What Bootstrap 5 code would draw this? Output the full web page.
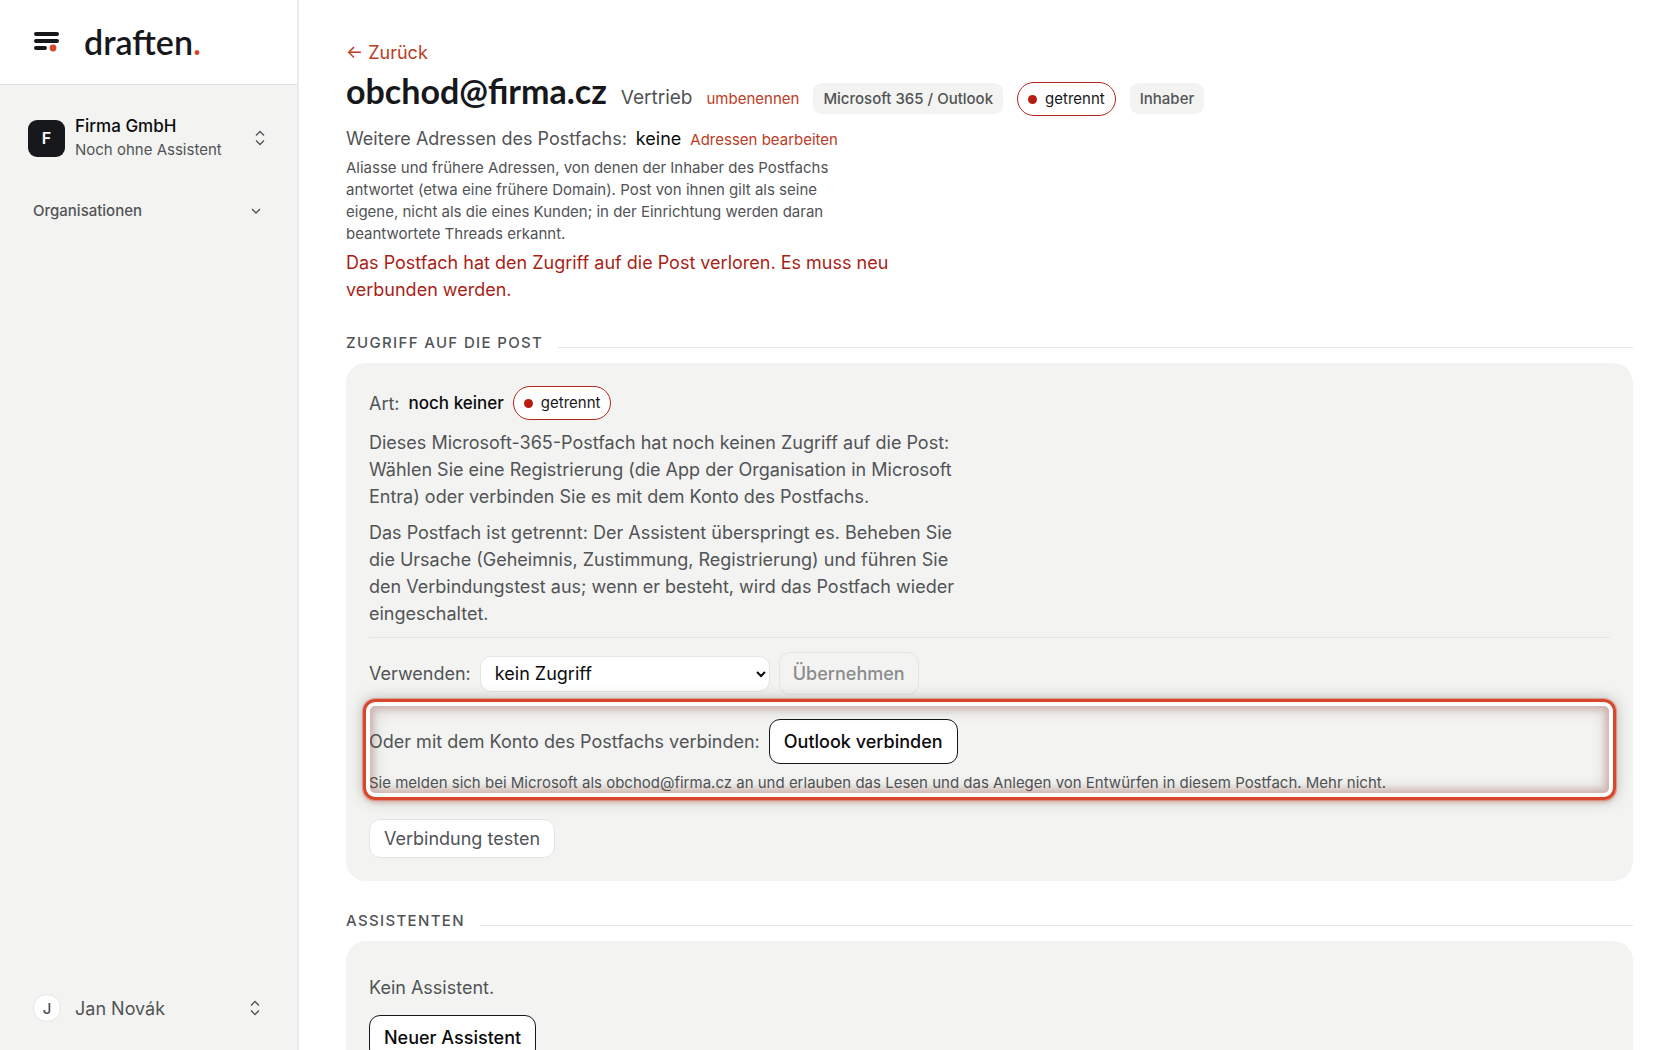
<!DOCTYPE html>
<html lang="de">
<head>
<meta charset="utf-8">
<meta name="viewport" content="width=device-width, initial-scale=1">
<title>draften – obchod@firma.cz</title>
<link href="https://cdn.jsdelivr.net/npm/bootstrap@5.3.0/dist/css/bootstrap.min.css" rel="stylesheet">
<style>
  :root { --ink: #17181c; --muted-ink: #515356; --paper: #f3f3f1; --rule: #e5e5e3; --accent: #bd3b22; --alarm: #a81f17; }
  body { font-family: Inter, "Liberation Sans", sans-serif; font-size: 18px; line-height: 27px; color: var(--muted-ink); background: #fff; }
  p { margin: 0; }
  a { color: var(--accent); text-decoration: none; }
  .text-ink { color: #0b0b0d; }
  .text-alarm { color: var(--alarm); }
  .text-strong { font-size: 17px; font-weight: 500; }
  .fs-note { font-size: 15px; line-height: 22px; }
  .display-face { font-family: Lato, Inter, sans-serif; color: var(--ink); }

  .app-shell { height: 100vh; }
  .side { width: 299px; background: var(--paper); border-right: 2px solid #ececea; }
  .side-brand { height: 85px; background: #fff; border-bottom: 1px solid #dededc; padding: 0 32px; gap: 24px; }
  .brand-name { font-size: 34px; line-height: 40px; font-weight: 600; color: var(--ink); }
  .brand-name span { color: #d6462c; }
  .plain-btn { border: 0; background: none; padding: 0; color: inherit; text-align: left; }
  .org-tile { width: 37px; height: 37px; border-radius: 9px; background: var(--ink); color: #fff; font-size: 16px; font-weight: 600; }
  .org-btn { margin: 29px 32px 0 28px; gap: 10px; line-height: 24px; }
  .org-btn .fs-note { line-height: 24px; }
  .nav-btn { margin: 38px 36px 0 33px; font-weight: 500; }
  .user-btn { margin: 0 37px 28px 33px; gap: 14px; }
  .user-dot { width: 28px; height: 28px; border-radius: 50%; background: #fff; border: 1px solid var(--rule); font-size: 15px; font-weight: 500; }

  .page { padding: 39px 47px 0; overflow: hidden; }
  .page-title { font-size: 34px; line-height: 44px; font-weight: 700; margin: 0; }
  .title-row { gap: 14px; margin: 3px 0 9px; }
  .role-name { font-size: 19px; }
  .chip { font-size: 15px; line-height: 23px; padding: 4px 10px; border-radius: 9px; background: var(--paper); font-weight: 500; }
  .state-pill { font-size: 15px; line-height: 24px; padding: 4px 10px; border: 1px solid #b3261c; border-radius: 17px; background: #fff; color: var(--ink); }
  .state-pill i { display: inline-block; width: 9px; height: 9px; margin-right: 8px; border-radius: 50%; background: #b71c13; }
  .gap-row { gap: 9px; }
  .narrow-note { max-width: 500px; margin-top: 5px; }
  .narrow-text { max-width: 592px; }
  .sect-head { gap: 15px; margin-top: 28px; }
  .sect-head h2 { font-size: 15px; line-height: 24px; font-weight: 500; letter-spacing: .09em; text-transform: uppercase; margin: 0; }
  .sect-head::after { content: ""; flex: 1; height: 1px; background: var(--rule); margin-top: 9px; }
  .panel { background: var(--paper); border-radius: 20px; padding: 23px; }
  .panel p.narrow-text { margin-top: 9px; }
  .panel-rule { border-top: 1px solid var(--rule); padding-top: 14px; margin-top: 10px; }
  .ctl { font-size: 18px; line-height: 27px; border-radius: 11px; padding: 5px 14px; background: #fff; border: 1px solid var(--rule); color: var(--muted-ink); }
  .ctl-strong { border-color: var(--ink); color: #0b0b0d; font-weight: 500; padding: 8px 14px; }
  .ctl-off { background: none; color: #8b8c8d; font-weight: 500; padding: 7px 13px; }
  .ctl-select { width: 290px; height: 36px; padding: 3px 10px; color: #0b0b0d; }
  .spot { position: relative; margin: 8px 0 25px; padding-top: 16px; }
  .spot::after { content: ""; position: absolute; inset: -4px -6px -6px; border: 3px solid #d8472b; border-radius: 12px; pointer-events: none;
    box-shadow: inset 0 0 0 4px #fff, inset 0 0 5px 8px rgba(190,70,60,.2), inset 0 0 14px 8px rgba(60,50,40,.2), 0 0 0 1px rgba(214,70,44,.35), 0 3px 3px rgba(214,70,44,.2), 0 0 14px rgba(60,60,50,.35); }
  .panel-empty { padding-top: 33px; }
  .panel-empty .ctl { margin-top: 14px; }
</style>
<script src="https://cdn.jsdelivr.net/npm/bootstrap@5.3.0/dist/js/bootstrap.bundle.min.js"></script>
</head>
<body>
<div class="app-shell d-flex overflow-hidden">
  <aside class="side d-flex flex-column flex-shrink-0">
    <div class="side-brand d-flex align-items-center flex-shrink-0">
      <button class="plain-btn d-flex" type="button" aria-label="Menü">
        <svg width="28" height="22" viewBox="0 0 28 22" fill="none" stroke="#17181c" stroke-width="4" stroke-linecap="round"><path d="M4 3h21M4 10h21M4 17h9"/><circle cx="21" cy="17" r="3.4" fill="#d6462c" stroke="none"/></svg>
      </button>
      <a href="#" class="brand-name display-face">draften<span>.</span></a>
    </div>
    <button class="org-btn plain-btn d-flex align-items-center" type="button">
      <span class="org-tile d-flex align-items-center justify-content-center">F</span>
      <span class="d-flex flex-column flex-grow-1"><span class="text-ink text-strong">Firma GmbH</span><span class="fs-note">Noch ohne Assistent</span></span>
      <svg width="10" height="16" viewBox="0 0 10 16" fill="none" stroke="#515356" stroke-width="1.3"><path d="M1 5.5l4-4 4 4M1 10.500l4 4 4-4"/></svg>
    </button>
    <button class="nav-btn plain-btn fs-note d-flex align-items-center justify-content-between" type="button">Organisationen
      <svg width="10" height="8" viewBox="0 0 10 8" fill="none" stroke="#515356" stroke-width="1.400"><path d="M1 2l4 4 4-4"/></svg>
    </button>
    <button class="user-btn plain-btn d-flex align-items-center mt-auto" type="button">
      <span class="user-dot d-flex align-items-center justify-content-center">J</span>
      <span class="flex-grow-1">Jan Novák</span>
      <svg width="10" height="16" viewBox="0 0 10 16" fill="none" stroke="#515356" stroke-width="1.3"><path d="M1 5.5l4-4 4 4M1 10.500l4 4 4-4"/></svg>
    </button>
  </aside>

  <main class="page flex-grow-1">
    <a href="#">← Zurück</a>
    <div class="title-row d-flex align-items-baseline">
      <h1 class="page-title display-face">obchod@firma.cz</h1>
      <span class="role-name">Vertrieb</span>
      <a href="#" class="fs-note">umbenennen</a>
      <span class="chip">Microsoft 365 / Outlook</span>
      <span class="state-pill"><i></i>getrennt</span>
      <span class="chip">Inhaber</span>
    </div>
    <div class="gap-row d-flex align-items-baseline"><span>Weitere Adressen des Postfachs:</span><span class="text-ink">keine</span><a href="#" class="fs-note">Adressen bearbeiten</a></div>
    <p class="fs-note narrow-note">Aliasse und frühere Adressen, von denen der Inhaber des Postfachs antwortet (etwa eine frühere Domain). Post von ihnen gilt als seine eigene, nicht als die eines Kunden; in der Einrichtung werden daran beantwortete Threads erkannt.</p>
    <p class="text-alarm narrow-text mt-1">Das Postfach hat den Zugriff auf die Post verloren. Es muss neu verbunden werden.</p>

    <div class="sect-head d-flex align-items-center"><h2>Zugriff auf die Post</h2></div>
    <section class="panel mt-2">
      <div class="gap-row d-flex align-items-center"><span>Art:</span><span class="text-ink text-strong">noch keiner</span><span class="state-pill"><i></i>getrennt</span></div>
      <p class="narrow-text">Dieses Microsoft-365-Postfach hat noch keinen Zugriff auf die Post: Wählen Sie eine Registrierung (die App der Organisation in Microsoft Entra) oder verbinden Sie es mit dem Konto des Postfachs.</p>
      <p class="narrow-text">Das Postfach ist getrennt: Der Assistent überspringt es. Beheben Sie die Ursache (Geheimnis, Zustimmung, Registrierung) und führen Sie den Verbindungstest aus; wenn er besteht, wird das Postfach wieder eingeschaltet.</p>
      <form class="panel-rule gap-row d-flex align-items-center">
        <label for="access">Verwenden:</label>
        <select id="access" class="ctl ctl-select"><option>kein Zugriff</option></select>
        <button class="ctl ctl-off" type="button" disabled>Übernehmen</button>
      </form>
      <div class="spot">
        <div class="gap-row d-flex align-items-center"><span>Oder mit dem Konto des Postfachs verbinden:</span><button class="ctl ctl-strong" type="button">Outlook verbinden</button></div>
        <p class="fs-note mt-2">Sie melden sich bei Microsoft als obchod@firma.cz an und erlauben das Lesen und das Anlegen von Entwürfen in diesem Postfach. Mehr nicht.</p>
      </div>
      <button class="ctl" type="button">Verbindung testen</button>
    </section>

    <div class="sect-head d-flex align-items-center"><h2>Assistenten</h2></div>
    <section class="panel panel-empty mt-2">
      <p>Kein Assistent.</p>
      <button class="ctl ctl-strong" type="button">Neuer Assistent</button>
    </section>
  </main>
</div>
</body>
</html>
